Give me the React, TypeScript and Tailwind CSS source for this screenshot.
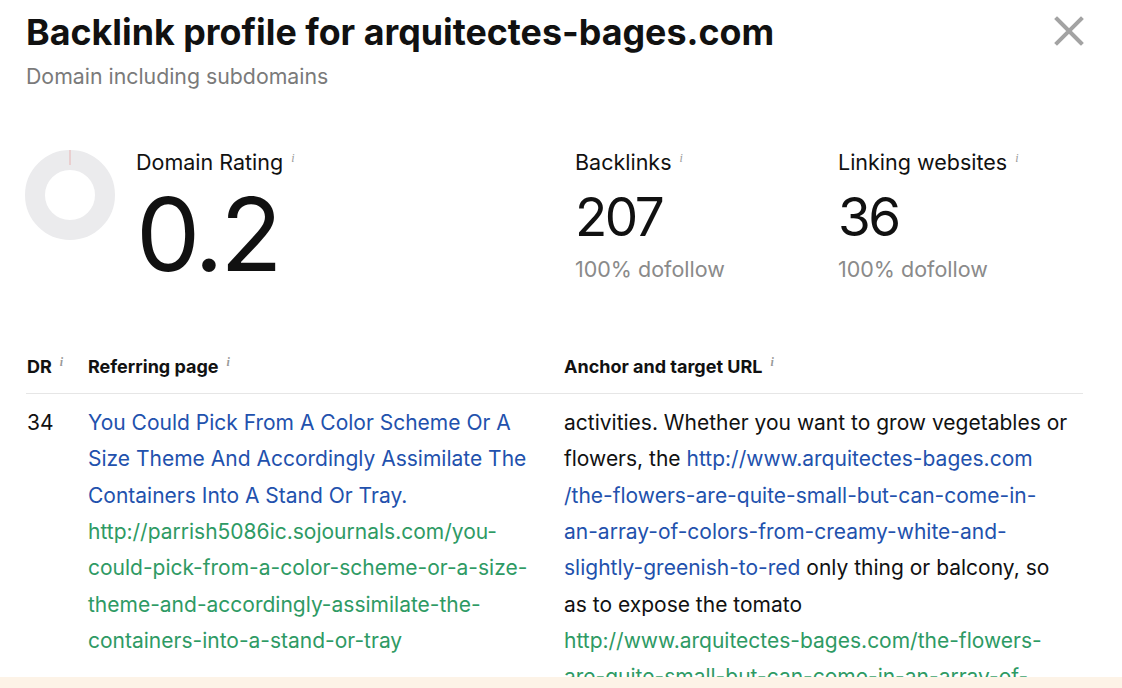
import React from 'react';

const font = { fontFamily: 'Inter, "Open Sans", Arial, sans-serif' };

function Info() {
  return (
    <span className="ml-[8px] align-super text-[12px] italic text-[#9a9a9a]" style={{ fontFamily: '"Liberation Serif", serif' }}>
      i
    </span>
  );
}

function Donut() {
  return (
    <svg width="92" height="92" viewBox="0 0 92 92" className="shrink-0 ml-[-2px]">
      <circle cx="46" cy="46" r="35" fill="none" stroke="#ebebed" strokeWidth="20" />
      <line x1="46" y1="1" x2="46" y2="16" stroke="#e7b3b3" strokeWidth="1" />
    </svg>
  );
}

function Stat({ label, value, sub }: { label: string; value: string; sub: string }) {
  return (
    <div>
      <div className="text-[21.5px] text-[#111] leading-[28px]">
        {label}
        <Info />
      </div>
      <div className="text-[53px] leading-[56px] mt-[13px] text-[#111] tracking-[-2.5px]">{value}</div>
      <div className="text-[21.5px] leading-[28px] text-[#8a8a8a] mt-[10px]">{sub}</div>
    </div>
  );
}

export default function App() {
  return (
    <div className="w-[1122px] h-[688px] flex flex-col bg-white overflow-hidden" style={font}>
      <div className="flex-1 overflow-hidden pl-[26px] pr-[39px]">
        {/* Header */}
        <div className="flex justify-between items-start pt-[10px]">
          <div>
            <h1 className="text-[35.8px] font-bold leading-[44px] text-[#111] tracking-[0px]">
              Backlink profile for arquitectes-bages.com
            </h1>
            <p className="text-[21.3px] leading-[28px] text-[#7a7a7a] mt-[8px]">Domain including subdomains</p>
          </div>
          <button className="mt-[6px] mr-[-1px] text-[#a3a3a3]">
            <svg width="30" height="30" viewBox="0 0 30 30">
              <path d="M3 3 L27 27 M27 3 L3 27" stroke="currentColor" strokeWidth="4" strokeLinecap="square" />
            </svg>
          </button>
        </div>

        {/* Stats */}
        <div className="flex mt-[54px]">
          <div className="flex w-[549px]">
            <div className="pt-[5px]">
              <Donut />
            </div>
            <div className="ml-[20px]">
              <div className="text-[21.5px] text-[#111] leading-[28px]">
                Domain Rating
                <Info />
              </div>
              <div className="text-[102px] leading-[100px] text-[#111] tracking-[-3.5px] mt-[8px]">0.2</div>
            </div>
          </div>
          <div className="w-[263px]">
            <Stat label="Backlinks" value="207" sub="100% dofollow" />
          </div>
          <div>
            <Stat label="Linking websites" value="36" sub="100% dofollow" />
          </div>
        </div>

        {/* Table */}
        <div className="mt-[66px]">
          <div className="grid grid-cols-[62px_476px_1fr] border-b border-[#e6e6e6] pb-[14px] text-[18px] font-bold text-[#111] leading-[24px]">
            <div className="pl-[1px]">DR<Info /></div>
            <div>Referring page<Info /></div>
            <div>Anchor and target URL<Info /></div>
          </div>
          <div className="grid grid-cols-[62px_476px_1fr] pt-[11px] text-[21px] leading-[36.3px]">
            <div className="pl-[1px] text-[#111]">34</div>
            <div className="pr-[20px]">
              <div className="text-[#2251ad]">
                You Could Pick From A Color Scheme Or A Size Theme And Accordingly Assimilate The Containers Into A Stand Or Tray.
              </div>
              <div className="text-[#2e9a64]">
                http://parrish5086ic.sojournals.com/you-could-pick-from-a-color-scheme-or-a-size-theme-and-accordingly-assimilate-the-containers-into-a-stand-or-tray
              </div>
            </div>
            <div className="text-[#111] pr-[15px]">
              activities. Whether you want to grow vegetables or flowers, the{' '}
              <span className="text-[#2251ad]">
                http://www.arquitectes-bages.com<wbr />/the-flowers-are-quite-small-but-can-come-in-an-array-of-colors-from-creamy-white-and-slightly-greenish-to-red
              </span>{' '}
              only thing or balcony, so as to expose the tomato
              <div className="text-[#2e9a64]">
                http://www.arquitectes-bages.com/the-flowers-are-quite-small-but-can-come-in-an-array-of-colors-from-creamy-white-and-slightly-greenish-to-red
              </div>
            </div>
          </div>
        </div>
      </div>
      <div className="h-[11px] bg-[#fdf3e7] shrink-0" />
    </div>
  );
}
